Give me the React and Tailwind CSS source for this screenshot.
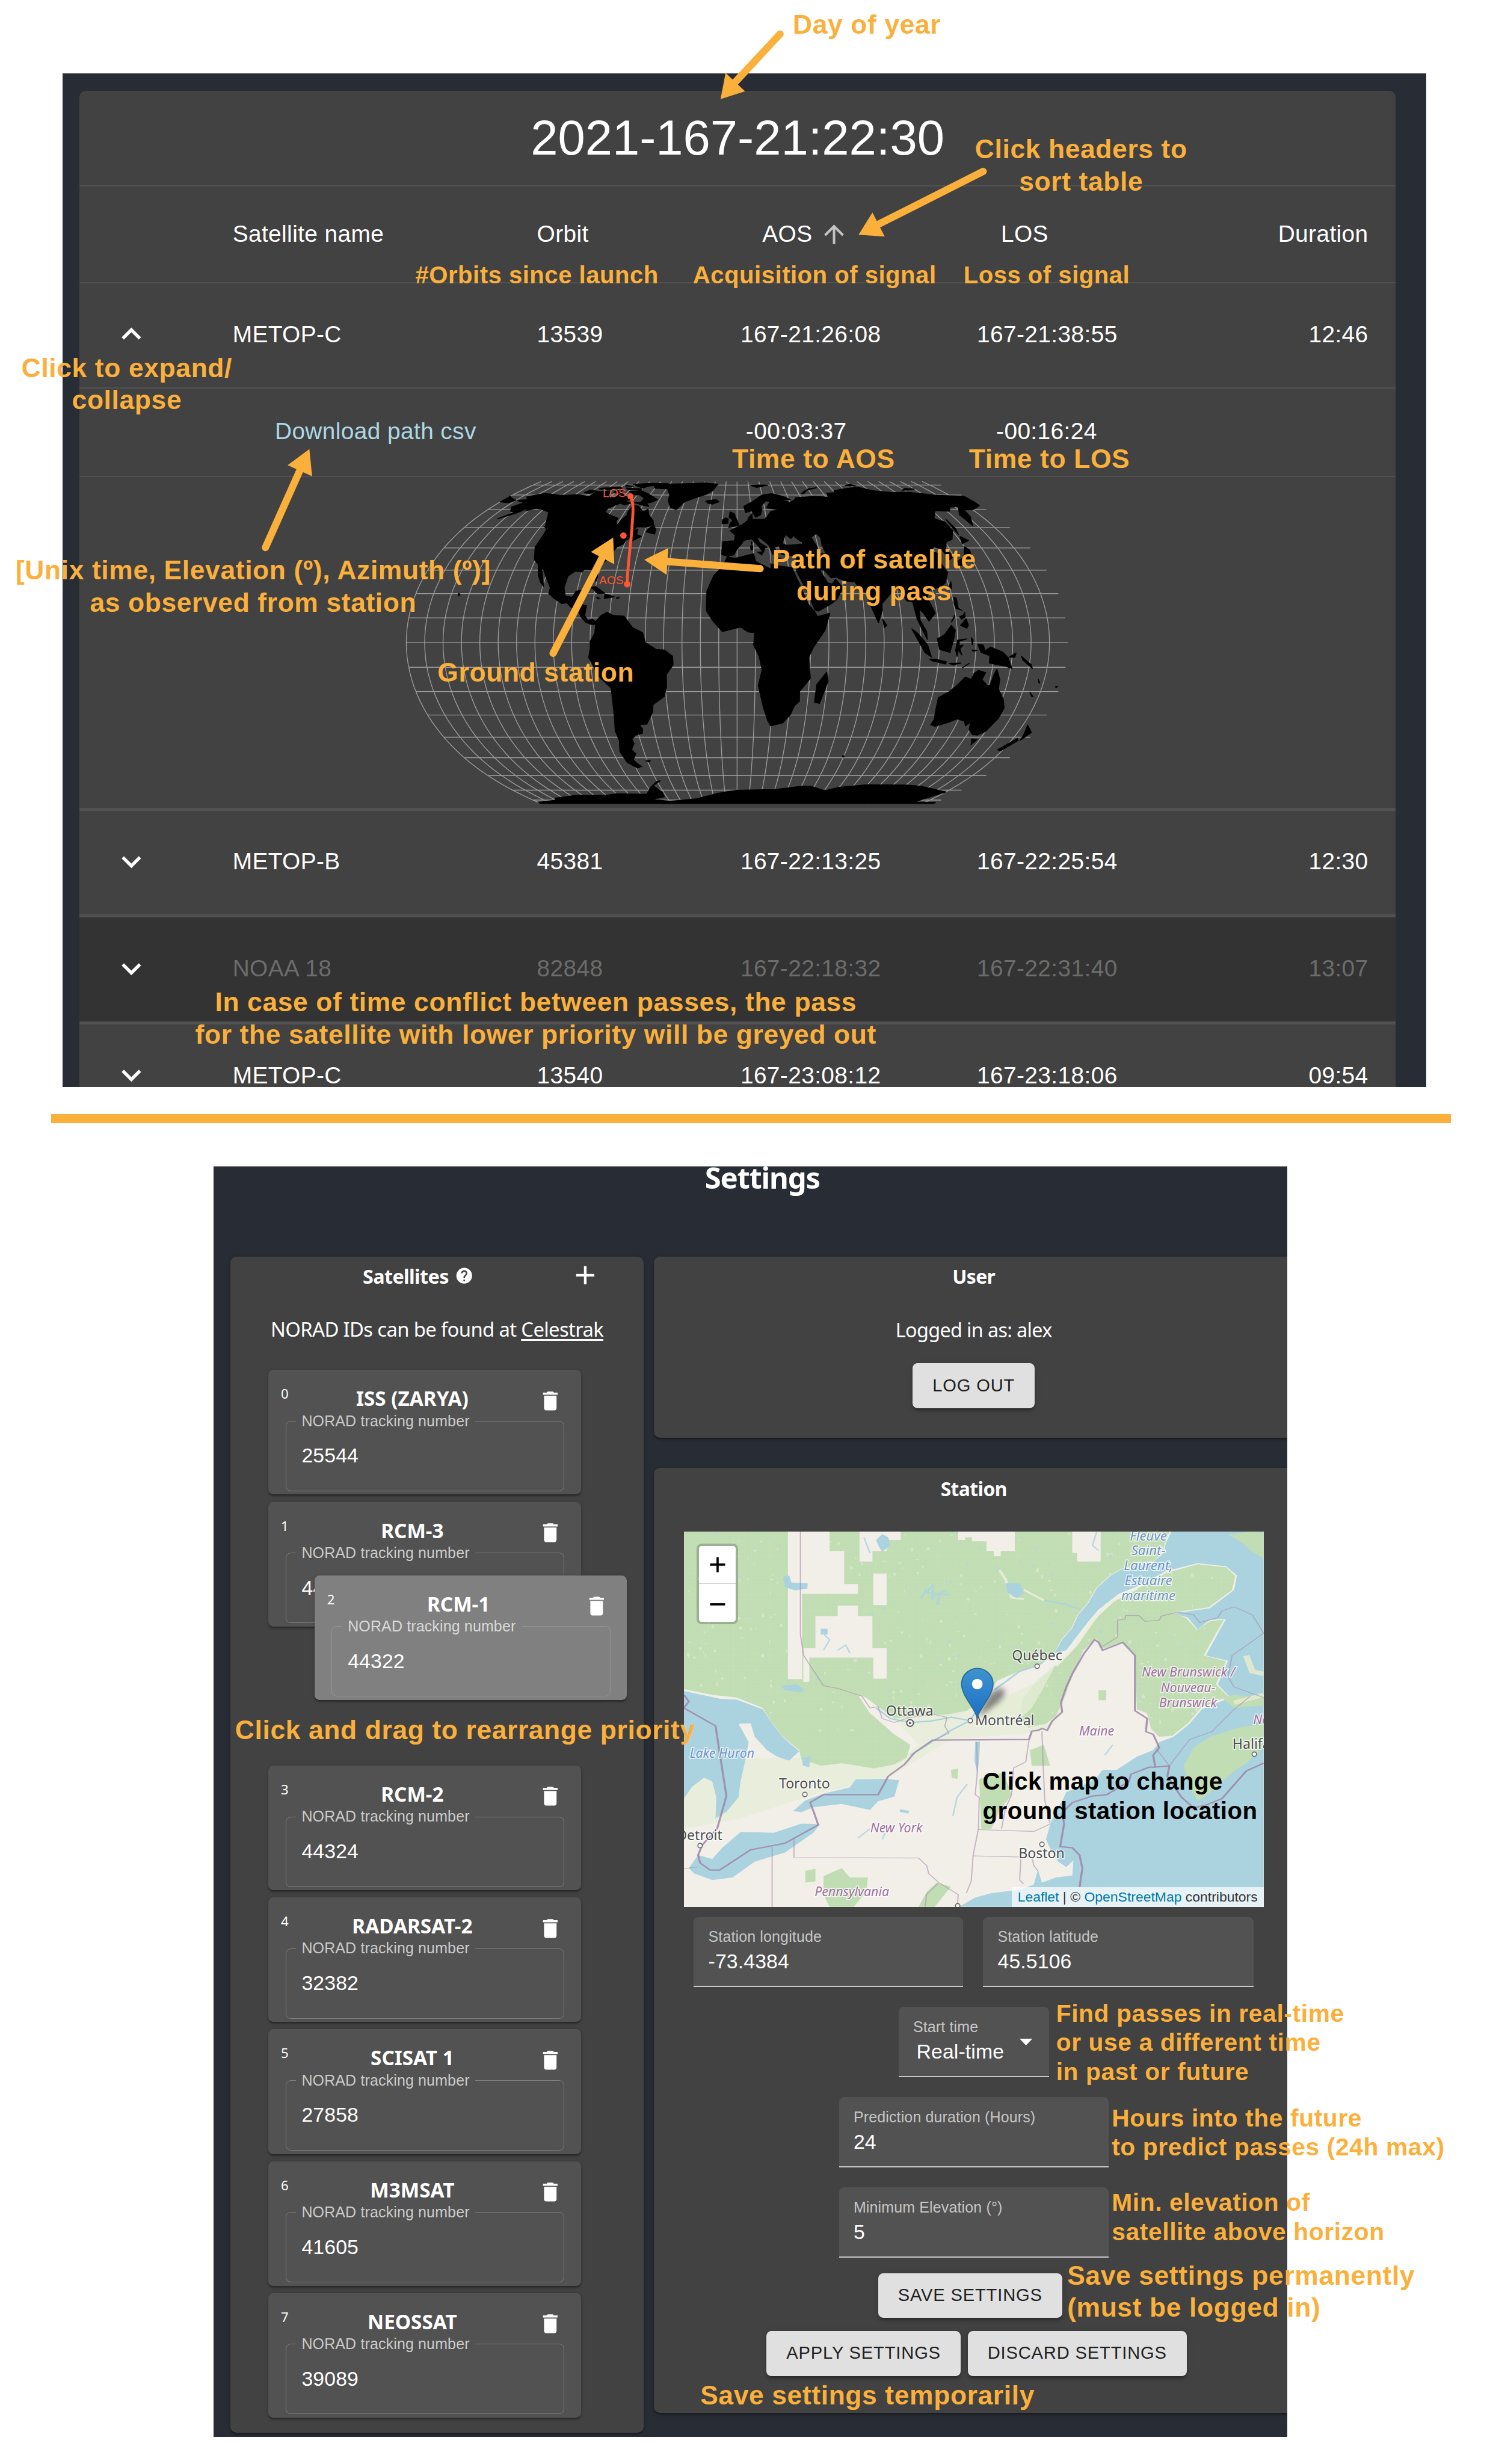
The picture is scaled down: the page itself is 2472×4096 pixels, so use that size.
import React from "react";

/* ---------- world map (Equal Earth projection) ---------- */

const A1 = 1.340264, A2 = -0.081106, A3 = 0.000893, A4 = 0.003796;
const SCALE = 219.65, CX = 1182, CY = 297.5;

function project(lon, lat) {
  const t = Math.asin((Math.sqrt(3) / 2) * Math.sin((lat * Math.PI) / 180));
  const t2 = t * t, t6 = t2 * t2 * t2;
  const x =
    ((2 * Math.sqrt(3)) / 3) * ((lon * Math.PI) / 180) * Math.cos(t) /
    (9 * A4 * t6 * t2 + 7 * A3 * t6 + 3 * A2 * t2 + A1);
  const y = t * (A4 * t6 * t2 + A3 * t6 + A2 * t2 + A1);
  return [(CX + x * SCALE).toFixed(1), (CY - y * SCALE).toFixed(1)];
}

const LAND = [
  [-168,66,-162,66.5,-166,68.5,-156,71.3,-141,69.7,-128,70.3,-115,68.5,-108,68,-96,68,-94,72,-88,68.5,-82,69,-82,67,-87,64.5,-94,61,-94,58.5,-88,56.5,-82,55,-82,53,-80,51.3,-79,54,-77,56.5,-78,59,-77,62.4,-73,62.2,-70,60.5,-67,58.5,-64.5,60.3,-62,57,-57,53.5,-56,51.8,-60,50.2,-66,50.2,-70,47.5,-65,49.2,-64.5,46.5,-61,45.5,-65.5,43.5,-66,45,-70,43.7,-70.5,42,-74,40.5,-76,37,-75.7,35.3,-78.5,33.8,-81.3,31.5,-80,27,-80.5,25.2,-82,27,-83.5,30,-89,30.3,-90,29.2,-94,29.5,-97.3,27.5,-97.7,22.5,-96,19,-92,18.5,-90.5,21,-87,21.5,-88.3,17,-88.5,15.8,-83.3,15,-83.7,11,-81.5,8.8,-79.5,9.5,-77.3,8.5,-78,7.3,-80,7.4,-83,8.3,-85.7,10.5,-87.5,13,-92,14.5,-94.5,16.2,-97,15.8,-102,18,-105.5,20,-105.5,22.5,-109.3,26.5,-112.5,30,-114.7,31.7,-112,27.5,-109.5,23,-112,24.8,-114.5,27.8,-117,32.5,-120.6,34.6,-122.5,37.7,-124.3,40.4,-124,46.3,-124.6,48.4,-122.7,49,-127.5,51,-130.3,54.5,-134,58.5,-139.5,59.7,-146,60.8,-151.5,59.3,-152,61,-156,58,-164.5,54.6,-158,58.5,-162,59,-165.5,61.5,-161,64.5,-168,65.7],
  [-61.5,66.5,-66,68.5,-72,71,-80,73.7,-89,73,-84,70,-78,70,-72.5,67.5,-73,64.5,-78,64.5,-70,62.7,-65,62,-68,64,-64,65],
  [-117,69,-116,73,-106,73.5,-102,69,-110,68.6],
  [-125,72,-123,74.3,-117,73.5,-120,71.2],
  [-62,82.5,-78,83,-92,81,-88,79,-80,76.2,-78,78.5,-66,80.5],
  [-80,74.7,-92,74.8,-95,76.5,-82,75.8],
  [-98,76,-110,75,-117,75.5,-115,76.5,-100,77],
  [-86,65.5,-80,64,-84,63,-87,63.7],
  [-98,80,-90,78.5,-97,78.5],
  [-101,73.5,-96,74,-96,72,-101,72],
  [-59,47.7,-53,46.7,-53,48.8,-55.8,51.5,-58,49.5],
  [-128,50.7,-123.5,48.4,-125.5,50],
  [-44,60,-49,61.5,-53,66,-54,70,-59,75.5,-70,76.2,-72,78.3,-62,81.5,-45,82.3,-30,83.5,-17,81.5,-19,77,-20,74,-25,70.5,-32,68,-40,65],
  [-24,65.5,-22,64,-18.5,63.4,-13.7,65,-16,66.5,-21,66],
  [-85,22,-80,23,-74.3,20.2,-78,20,-82,22.3],
  [-74,19.8,-68.5,18.6,-74,18],
  [-67.2,18.4,-65.6,18.3,-67.2,18],
  [-78.3,18.4,-76.3,18,-77.5,17.8],
  [-156,20.2,-155,19.5,-155.8,19],
  [-77.3,8.5,-75,10.8,-71.5,12.3,-68,11,-62,10.7,-57,6,-51.5,4,-50,0,-44,-2.8,-39.5,-3,-35.2,-5.5,-35,-9,-39,-13,-39.3,-18,-41,-22,-48,-25.5,-48.7,-28.5,-53.5,-34,-58,-34.2,-56.7,-36.3,-57.5,-38.2,-62,-39,-65,-41,-64.5,-43,-67.5,-46,-65.8,-48,-69,-51,-68.3,-52.5,-65.5,-54.8,-69,-55.5,-74,-52.5,-75.5,-47,-73,-41.5,-73.5,-37,-71.5,-30,-70.3,-18.5,-76,-14,-81,-6,-80,-2.5,-80,0.5,-77.5,3.8],
  [-61,-51.7,-58,-51.5,-59,-52.3],
  [-6,35.8,-1,35.3,10,37.3,11,33.8,19.8,30.4,20,32.8,25,31.7,32,31.2,32.7,29.5,35.5,24,37.2,20,39.5,15.5,43.2,12,44,10.5,51,11.9,48,5,41.5,-2,39,-6,40.5,-14.5,35,-20,35.4,-24,32.8,-26,31,-29.8,27,-33.5,20,-34.8,18,-32.5,15,-26.5,11.8,-17.5,13.7,-11,12,-5.5,9,-1,9.6,4,6,4.3,2,6.3,-4,5.2,-8,4.4,-13,8.5,-17,13,-17,21,-13.5,27.5,-9.8,30.5,-6.8,34.2],
  [49.3,-12,50.4,-15.7,47,-25,44,-24.5,44.3,-17],
  [-9,43,-9.3,37,-5.6,36,-2,36.8,0,39.5,3.2,42.3,4,43.5,9,44.3,12.5,41.5,16,38,17,40,18.5,40.2,14,42.5,12.5,45.3,15,44.5,19.5,41.5,21.5,37,24,38,23,40.5,26,41,27,37,31,36.5,36,36.7,35,33,34.2,31.2,34.8,29,39,21.5,43,13,45,12.8,52,15.7,55.5,17.5,59.8,22.5,56.3,26,54,24,51.5,24.5,50,27,48,30,50.5,30,54,26.7,57,27,61.5,25.2,67,25,70,21,72.8,20.5,73.5,16,77.3,8,80,13,80.3,15.8,86.5,20.3,91,22.5,94.3,17,97.5,16.5,98.5,10,100.5,6,103.5,1.3,103.3,4.5,100.2,9,100.5,13.5,102.5,12,105,8.7,109,12,106,18.5,108.5,21.6,114,22.5,118.5,24.5,122,29,119.5,35,122.5,37,118,38.8,121.5,40.5,125,39.5,126.5,34.5,129.4,36,127.7,39.5,131,43,135.5,44,140.5,48.5,140.3,53,135.3,54.7,142,59.3,152,59,156,61.5,163,62,156,57,156.7,51,162,56,163.5,59.8,170.5,60,179.5,62.5,180,65,180,69,160,69.7,140,72.5,128,72,113,73.7,104,77.5,87,75,80.5,73.5,80,72,73,71.5,72,68,68,68.5,60,69,54,68.3,46,68,44,66.2,40,64.7,33,66.7,41,66.5,36,69,28,71,20,70,12.5,65.5,5,62,6,58.2,10.5,59.3,12.8,55.5,16.5,57,18,60,17.5,62,22,65.7,25,65.2,21.5,61,29.5,60,24,58.8,21,56,19,54.5,10.5,54.3,10.5,57.5,8.2,55.5,7,53.5,3,51.3,-1.5,49.5,-4.5,48.4,-1.2,46,-1.7,43.4],
  [28,42,31,46.5,34,44.5,38,47,36.5,45.3,41.5,42,36,41.5,31,41.2],
  [47,45,51,47,53,45,52.5,41,54,37,50,37.5,49,41],
  [-180,69,-175,67.3,-170,66,-173,64.3,-180,65],
  [-5.5,50,1.3,51.3,0,53.5,-2,57.5,-5,58.6,-5.5,55.5,-3,54,-4.7,52],
  [-10,52,-6.3,52.2,-6,54.5,-8,55.2,-10,54],
  [52,71,56,73.5,68,76.8,60,75.5,54,71],
  [12,79.8,20,80.2,27,80,17,77],
  [95,79.5,100,81,104,79],
  [138,74,150,75.3,143,76],
  [12.5,38,15.5,38.2,15,36.7],
  [8.3,41,9.7,41,9.5,39,8.5,39],
  [8.7,42.8,9.5,42.8,9.2,41.5],
  [23.6,35.5,26.2,35.2,24.5,34.9],
  [130,31.5,131,34,136,35.8,140,40.5,141.8,39,140.5,35.5,135.7,33.5],
  [140,42,145.3,43.5,142,45.5],
  [142,46.5,143.5,49.5,143,54.3,142,50],
  [120,23,121.8,25,121,22],
  [108.7,19.3,111,20,109.5,18.3],
  [120.3,16,121,18.5,122.2,18,122,14,124,13,120.6,14],
  [122,7,125.5,9.7,126.3,7,125.3,5.8],
  [117.2,8.3,119.5,11.2,119,10],
  [122,10.5,124,11,125.3,12.3,125,10.3,123,9.5],
  [109,1.5,113,3.2,117,7,119,5,117.8,1,116,-4,110.3,-2.8],
  [95.3,5.5,98.5,3.7,103.7,-1,106,-5.8,102.3,-4],
  [105.2,-6.7,108.5,-6.7,114.4,-7.8,114,-8.7,106.5,-7.4],
  [119,-3,120,1,125,1.5,120.8,0.5,121,-1.3,123,-1,121.3,-2.5,122.5,-5,120.5,-3,120,-5.6],
  [127.5,2,128.5,1,128,-0.8],
  [128,-3,130.7,-3.2,128.5,-3.5],
  [116,-8.4,122.5,-8.3,118,-9],
  [131,-0.8,134,-1,135,-3.3,138,-1.8,144.5,-3.8,147.8,-6,150.8,-10.5,147,-9.5,143,-9,138,-8.3,137.8,-5.3,133,-4,132,-2.5],
  [148.5,-5.8,152,-4.2,151.5,-6],
  [155,-5.5,161,-9,162,-10.5,156,-7],
  [123.5,-10.2,127,-8.4,125,-9.5],
  [164.2,-20.2,167,-22.2,166,-22],
  [166.7,-15,168,-16.5,167.3,-16.2],
  [177.3,-18,178.6,-17.7,178,-18.3],
  [79.8,9.5,81.8,7,80.3,6],
  [69,-49,70.5,-49.2,69.5,-49.7],
  [113.7,-22.5,114.2,-26.5,115.7,-32,115.1,-34.3,118,-35,124,-33.5,129,-31.7,134,-32.7,136,-34.8,138,-33.2,139.5,-36.5,143.5,-38.8,146.5,-39,150,-37.4,153,-31.5,153.3,-27,150.8,-23.3,146,-19,145.3,-15,142.6,-10.8,141.5,-13,140.8,-17.5,139,-17.4,135.5,-15,136.8,-12.2,132.6,-11.3,130.5,-12.5,129.5,-15,126,-14,122.3,-17.5,119,-20],
  [144.8,-40.8,148.3,-41,147,-43.6],
  [172.8,-34.5,178.3,-37.8,175.3,-41.5,174.8,-39],
  [172.7,-40.6,174.2,-41.5,171,-44.5,169,-46.6,166.6,-46],
  [-180,-90,-180,-84.5,-160,-80,-157,-77.5,-135,-74.5,-110,-74.5,-100,-73,-75,-73.5,-68,-68,-60,-63.5,-57.5,-63.3,-65,-66.5,-61,-72,-62,-76,-75,-79,-60,-82,-36,-78.5,-15,-72.5,0,-70,30,-69.5,50,-67,57,-67,69,-70,72,-70,80,-67.8,100,-66,130,-66.2,143,-67,170,-71.5,163,-78,160,-84,180,-84.5,180,-90],
];

const toPath = (flat, close) => {
  let d = "";
  for (let i = 0; i < flat.length; i += 2) {
    d += (i ? "L" : "M") + project(flat[i], flat[i + 1]).join(" ");
  }
  return d + (close ? "Z" : "");
};

const landPath = LAND.map((p) => toPath(p, true)).join("");

const gridPath = (() => {
  let d = "";
  for (let lon = -180; lon < 180; lon += 10) {
    const line = [];
    for (let lat = -90; lat <= 90; lat += 3) line.push(lon, lat);
    d += toPath(line);
  }
  for (let lat = -80; lat <= 80; lat += 10) d += toPath([-180, lat, 180, lat]);
  return d;
})();

function WorldMap() {
  return (
    <svg className="block h-[594px] w-[2365px]" viewBox="0 0 2365 594">
      <path d={gridPath} fill="none" stroke="#9a9a9a" strokeWidth="1.5" />
      <path d={landPath} fill="#000" stroke="#000" strokeWidth="1.6" strokeLinejoin="round" fillRule="evenodd" />
      <path d="M990.4 34.8C998 50 994 70 993 92C990 130 985 160 984.4 192.6" fill="none" stroke="#ff5533" strokeWidth="5.2" />
      <circle cx="990.4" cy="34.8" r="5.5" fill="#ff5533" />
      <circle cx="984.4" cy="192.6" r="5.8" fill="#ff5533" />
      <circle cx="977.7" cy="105.2" r="5.8" fill="#ff5533" />
      <text x="940.5" y="36" fontSize="20.5" fill="#ff5533" className="font-['Liberation_Sans',sans-serif]">LOS</text>
      <text x="934" y="192.6" fontSize="20.5" fill="#ff5533" className="font-['Liberation_Sans',sans-serif]">AOS</text>
    </svg>
  );
}

/* ---------- passes panel ---------- */

function Chevron({ up }) {
  return (
    <svg className="ml-[58px] size-[70px]" viewBox="0 0 24 24" fill="#fff">
      {up ? (
        <path d="M12 8l-6 6 1.41 1.41L12 10.83l4.59 4.58L18 14z" />
      ) : (
        <path d="M16.59 8.59L12 13.17 7.41 8.59 6 10l6 6 6-6z" />
      )}
    </svg>
  );
}

function PassRow({ up, name, orbit, aos, los, duration, dim, className }) {
  return (
    <div className={`flex shrink-0 items-center border-[#515151] pb-[3px] ${className}`}>
      <div className="w-[275px]"><Chevron up={up} /></div>
      <div className={`flex flex-1 items-center pr-[49px] ${dim ? "text-[#6c6c6c]" : "text-white"}`}>
        <div className="w-[547px]">{name}</div>
        <div className="w-[316px]">{orbit}</div>
        <div className="w-[352px] text-center">{aos}</div>
        <div className="w-[498px] text-center">{los}</div>
        <div className="flex-1 text-right">{duration}</div>
      </div>
    </div>
  );
}

function PassesPanel() {
  return (
    <section className="ml-[112px] mt-[132px] h-[1821px] w-[2451px] shrink-0 overflow-hidden bg-[#282c34] pl-[31px] pt-[31px]">
      <div className="flex h-[1900px] w-[2365px] flex-col rounded-[11px] bg-[#424242] font-['Liberation_Sans',Arial,sans-serif] text-[42px] tracking-[0.01em] text-white">
        <div className="flex h-[172px] shrink-0 items-center justify-center border-b-[3px] border-[#515151] text-[88px] tracking-normal">
          2021-167-21:22:30
        </div>
        <div className="flex h-[174px] shrink-0 items-center border-b-[3px] border-[#515151] pl-[275px] pr-[49px]">
          <div className="w-[547px]">Satellite name</div>
          <div className="w-[316px]">Orbit</div>
          <div className="flex w-[352px] items-center justify-center">
            AOS
            <svg className="ml-[13px] mr-[18px] size-[53px]" viewBox="0 0 24 24" fill="#c3c3c3">
              <path d="M4 12l1.41 1.41L11 7.83V20h2V7.83l5.58 5.59L20 12l-8-8-8 8z" />
            </svg>
          </div>
          <div className="w-[498px] pr-[81px] text-center">LOS</div>
          <div className="flex-1 text-right">Duration</div>
        </div>
        <PassRow up name="METOP-C" orbit="13539" aos="167-21:26:08" los="167-21:38:55" duration="12:46" className="h-[189px] border-b-[3px]" />
        <div className="flex h-[159px] shrink-0 items-center border-b-[3px] border-[#515151] pb-0.5 pl-[351px]">
          <div className="w-[788px] text-[#add8e6]">Download path csv</div>
          <div className="w-[298px] text-center">-00:03:37</div>
          <div className="w-[602px] text-center">-00:16:24</div>
        </div>
        <div className="h-[600px] shrink-0 border-b-[6px] border-[#515151]"><WorldMap /></div>
        <PassRow name="METOP-B" orbit="45381" aos="167-22:13:25" los="167-22:25:54" duration="12:30" className="h-[192px] border-b-[6px]" />
        <PassRow dim name="NOAA 18" orbit="82848" aos="167-22:18:32" los="167-22:31:40" duration="13:07" className="h-[192px] border-b-[6px] bg-[#333333]" />
        <PassRow name="METOP-C" orbit="13540" aos="167-23:08:12" los="167-23:18:06" duration="09:54" className="h-[192px] border-b-[6px]" />
      </div>
    </section>
  );
}

/* ---------- settings panel ---------- */

const SHADOW = "shadow-[0_5px_3px_-2px_rgba(0,0,0,0.2),0_2px_3px_0_rgba(0,0,0,0.14),0_2px_7px_0_rgba(0,0,0,0.12)]";

function SatelliteCard({ index, name, norad, dragged }) {
  return (
    <div className={`h-[224px] w-[562px] rounded-[9px] ${SHADOW} ${dragged ? "bg-[#808080]" : "bg-[#525252]"}`}>
      <div className="flex h-[75px] items-start font-['Noto_Sans',sans-serif] text-white">
        <span className="w-[60px] pl-[23px] text-[24px] leading-[86px]">{index}</span>
        <span className="flex-1 text-center text-[36px] font-bold leading-[102px]">{name}</span>
        <svg className="ml-[27px] mr-[32px] mt-[33px] size-[45px]" viewBox="0 0 24 24" fill="#fff">
          <path d="M6 19c0 1.1.9 2 2 2h8c1.100 0 2-.9 2-2V7H6v12zM19 4h-3.500l-1-1h-5l-1 1H5v2h14V4z" />
        </svg>
      </div>
      <fieldset className={`ml-[31px] h-[143px] w-[501px] rounded-[9px] border-2 pl-[18px] font-['Liberation_Sans',Arial,sans-serif] tracking-[0.01em] ${dragged ? "border-[#959595]" : "border-[#7e7e7e]"}`}>
        <legend className={`px-[10px] text-[27px] leading-[34px] ${dragged ? "text-[#d9d9d9]" : "text-[#cbcbcb]"}`}>NORAD tracking number</legend>
        <div className="mt-[23px] pl-[10px] text-[36.500px] leading-[44px] text-white">{norad}</div>
      </fieldset>
    </div>
  );
}

function Button({ children, className }) {
  return (
    <button className={`h-[81px] rounded-[9px] bg-[#e0e0e0] font-['Liberation_Sans',Arial,sans-serif] text-[31.500px] tracking-[0.0286em] text-[#212121] shadow-[0_7px_3px_-5px_rgba(0,0,0,0.2),0_5px_5px_0_rgba(0,0,0,0.14),0_2px_11px_0_rgba(0,0,0,0.12)] ${className}`}>
      {children}
    </button>
  );
}

function Field({ label, value, className }) {
  return (
    <div className={`h-[126px] rounded-t-[9px] border-b-[3px] border-[#c6c6c6] bg-[#525252] px-[26px] pt-[19px] font-['Liberation_Sans',Arial,sans-serif] tracking-[0.01em] ${className}`}>
      <div className="text-[27px] leading-[34px] text-[#c6c6c6]">{label}</div>
      <div className="mt-[5px] text-[36.500px] leading-[44px] text-white">{value}</div>
    </div>
  );
}

const SPECKS = (() => {
  const out = [];
  let s = 7;
  const rnd = () => ((s = (s * 16807) % 2147483647) / 2147483647);
  for (let i = 0; i < 520; i++) {
    out.push([50 + rnd() * 1300, 75 + rnd() * 760, 1 + rnd() * 3.5, 1.5 + rnd() * 6, rnd()]);
  }
  return out;
})();

const SEA = "M1245 68L1473 68L1473 1497L720 1497L760 1462L800 1445L870 1432L905 1412L915 1355L925 1405L960 1385L1000 1378L1003 1320L985 1345L965 1325L950 1290L935 1240L945 1185L960 1130L975 1095L985 1060L1020 1040L1060 1005L1075 975L1110 975L1160 925L1200 900L1215 870L1250 850L1290 800L1320 745L1390 700L1360 650L1385 560L1330 540L1380 400L1340 405L1310 440L1285 395L1250 380L1340 360L1400 290L1407 235L1380 200L1310 188L1230 220L1170 270L1115 305L1065 365L1040 410L1010 470L985 520L955 532L975 480L1000 435L1015 385L1040 340L1060 285L1095 235L1125 210L1200 185L1225 150L1232 110Z";

const GREENS = [
  "M40 68L1240 68L1230 110L1222 150L1200 182L1125 208L1092 235L1058 285L1038 340L1013 385L998 435L973 480L953 535L915 575L860 605L815 635L790 690L740 750L690 765L640 765L560 780L520 735L490 700L470 690L500 760L560 840L600 880L590 930L560 955L510 970L430 950L380 960L330 935L325 900L285 850L255 790L235 740L170 700L110 690L40 668Z",
  "M1115 318L1175 275L1232 226L1310 192L1380 204L1403 238L1395 290L1338 356L1250 376L1282 398L1308 442L1342 408L1375 404L1350 470L1325 540L1380 562L1355 650L1385 695L1318 740L1288 795L1248 845L1215 850L1195 820L1185 760L1160 745L1155 540L1125 488L1075 515L1058 475L1028 520L1003 605L985 680L960 770L935 800L890 815L870 770L880 700L905 650L950 590L990 540L1015 480L1050 410Z",
  "M1473 800L1410 815L1340 850L1300 890L1275 960L1290 1040L1310 1095L1350 1050L1400 980L1430 950L1473 890Z",
  "M1473 730L1400 740L1370 700L1400 690L1473 700Z",
  "M1385 80L1440 68L1473 72L1473 170L1440 140L1420 110Z",
  "M770 1010L830 985L850 1070L820 1130L800 1200L775 1200Z",
  "M385 1380L430 1350L450 1385L495 1385L490 1440L460 1497L400 1497L385 1450Z",
  "M340 1360L365 1352L365 1400L340 1405Z",
  "M895 900L930 880L945 960L900 960Z",
  "M700 975L718 970L716 1010L702 1005Z",
  "M640 1440L665 1405L700 1420L660 1497L620 1497Z",
];

const CLEARINGS = [
  "M297 68H400V142H436V268H470V305H332V630H297Z",
  "M365 390H420V350H470V390H506V512H541V628H508V548H365Z",
  "M508 228H541V348H508Z",
  "M474 68H576V100H541V142H506V182H474Z",
  "M718 68H858V142H823V162H806V142H788V105H752V90H735V100H718Z",
  "M1000 68H1070V182H1012V150H1000Z",
  "M335 512H366V548H350V640H335Z",
];

const LAKES = [
  "M40 675L130 705L170 708L235 745L255 792L285 852L325 905L300 940L270 925L245 900L215 850L205 798L175 800L200 870L190 950L180 1020L175 1080L145 1135L118 1160L120 1080L110 1020L90 1005L60 1040L40 1085Z",
  "M310 1132L340 1092L385 1066L450 1042L465 1012L540 1010L572 1015L560 1078L520 1095L500 1128L430 1105L360 1118L330 1137Z",
  "M52 1350L75 1300L110 1315L135 1272L180 1212L262 1215L330 1180L376 1182L360 1215L290 1290L215 1325L160 1385L110 1395L65 1370Z",
  "M285 240L300 235L306 262L346 265L345 285L315 292L290 280Z",
  "M835 265L870 265L880 300L862 322L840 300Z",
  "M280 655L320 650L336 668L330 680L290 672Z",
  "M760 868H772L770 930L766 990L758 940Z",
  "M515 100L530 78L545 90L550 120L530 145L520 120Z",
  "M378 438H395V460H378Z",
  "M332 930L352 925L350 965L334 960Z",
  "M575 1125L597 1132L595 1142L573 1135Z",
];

const BORDERS_MAJOR = [
  "M40 690L52 715L40 740L118 808L145 1075L122 1200L85 1262L75 1300L80 1330L105 1357L128 1357L205 1280L290 1255L372 1185L362 1140L352 1100L385 1070L520 1070L545 1000L585 955L610 910L655 862L893 860L900 828L915 825L925 818L938 825L950 790L975 755L972 720L985 660L1000 610L1030 530L1055 480L1065 490L1075 520L1125 490L1155 540L1155 750L1185 780L1182 830L1200 840L1215 890L1200 920L1205 965L1240 960",
  "M1205 965L1190 965L1145 992L1140 1020L1085 1070L1050 1075L1000 1100L975 1140L980 1180L970 1268L1000 1272L1018 1300L1025 1350L1018 1422",
  "M1240 960L1235 1000L1270 1080L1300 1120L1330 1110L1370 1085L1430 980L1473 950",
];

const BORDERS_MINOR = [
  "M328 68L328 460L336 540L385 655L420 665L480 695L500 740L520 735L530 780L560 795L600 775L660 765L690 775L685 810L695 835L660 862",
  "M764 870L765 990L760 1070L770 1080L768 1200L755 1300L750 1400L738 1445",
  "M768 1203L905 1210L945 1182",
  "M893 862L885 945L855 968L850 1070L835 1120L825 1200",
  "M925 830L928 960L932 1090L945 1180",
  "M755 1303L870 1307L900 1307L905 1340L915 1360",
  "M873 1310L870 1395L880 1410",
  "M312 1240L312 1310L620 1311L640 1340L645 1370L670 1405L718 1450L716 1497",
  "M258 1268V1497",
  "M636 1497L640 1450L668 1408",
  "M1075 505L1112 470L1112 405L1130 402L1132 388L1165 388L1180 410L1215 405L1220 390L1260 375L1300 385L1315 415L1360 395L1370 370L1400 355L1445 385L1473 455L1395 540L1385 620L1400 660L1473 700",
  "M1210 900L1240 960L1290 860L1345 830L1400 745L1440 695",
  "M40 1352L75 1345",
];

function MapLabel({ x, y, size = 25, fill = "#4d4d4d", italic, anchor = "middle", children }) {
  return (
    <text
      x={x}
      y={y}
      fontSize={size}
      textAnchor={anchor}
      fill={fill}
      stroke="#ffffff"
      strokeOpacity="0.75"
      strokeWidth="3.5"
      paintOrder="stroke"
      fontStyle={italic ? "italic" : "normal"}
      className="font-['Noto_Sans',sans-serif]"
    >
      {children}
    </text>
  );
}

const CITIES = [[634.7, 242], [514.7, 339.800], [217.4, 472.4], [29, 564.4], [643.4, 562], [1025, 400], [492, 672.500]];

function StationMap() {
  const blue = "#6f93c8";
  const purple = "#9d6f9e";
  return (
    <div className="relative mt-[40px] h-[675px] w-[1042px] overflow-hidden bg-[#f2efe9]">
      <svg className="block h-[675px] w-[1042px]" viewBox="0 0 1042 675">
        <defs>
          <linearGradient id="pin" x1="0" y1="0" x2="0" y2="1">
            <stop offset="0" stopColor="#3e93cf" />
            <stop offset="1" stopColor="#1d6fc4" />
          </linearGradient>
          <filter id="pinShadow" x="-50%" y="-50%" width="200%" height="200%">
            <feGaussianBlur stdDeviation="5" />
          </filter>
          <pattern id="tiles" width="9" height="9" patternUnits="userSpaceOnUse">
            <path d="M0 0H9M0 0V9" stroke="#d3e6c4" strokeWidth="1.2" />
          </pattern>
        </defs>
        <g transform="translate(-29.08 -32.09) scale(0.727 0.4719)">
          <path d="M40 930L330 930L560 960L620 880L560 780L900 690L980 560L1000 800L930 830L700 860L540 1010L380 1060L180 1160L40 1200Z" fill="#e9eddb" />
          <path d={GREENS[0]} fill="#c1ddb3" />
          <path d={SEA} fill="#aad3df" />
          {GREENS.slice(1).map((d) => <path key={d} d={d} fill="#c1ddb3" />)}
          <path d={GREENS[0]} fill="url(#tiles)" opacity="0.4" />
          <path d={GREENS[1]} fill="url(#tiles)" opacity="0.4" />
          <clipPath id="woods"><path d={GREENS[0]} /><path d={GREENS[1]} /></clipPath>
          <g clipPath="url(#woods)">
            {SPECKS.map(([x, y, w, h, k], i) => (
              <ellipse key={i} cx={x} cy={y} rx={w} ry={h} fill={k < 0.35 ? "#b2d7dc" : "#dbe8cd"} opacity="0.75" />
            ))}
            <path d="M640 300L655 268M650 320L690 290M625 325L640 285M665 345L675 300M640 300L700 310M655 330L655 270" fill="none" stroke="#aed5dd" strokeWidth="5" />
          </g>
          {CLEARINGS.map((d) => <path key={d} d={d} fill="#f2efe9" />)}
          {LAKES.map((d) => <path key={d} d={d} fill="#aad3df" />)}
          <path d="M820 215L835 250L850 320L880 325M880 290L930 330" fill="none" stroke="#e6ecd9" strokeWidth="7" />
          <path d="M835 265L870 265L880 300L862 322L840 300Z" fill="#aad3df" />
          <path d="M1160 285L1085 345L1050 410L1010 500L960 580" fill="none" stroke="#eeeede" strokeWidth="7" />
          <path d="M960 570L900 650L830 700L790 770L850 810L900 740L930 660Z" fill="#e4ecd6" opacity="0.8" />
          <path d="M1068 525L1125 495L1152 545L1152 745L1182 790L1180 835L1208 880L1150 925L1085 965L1045 930L960 900L930 830L960 790L985 690L1003 610L1040 540Z" fill="#f2efe9" />
          <path d="M1065 672H1084V710H1065Z" fill="#c1ddb3" />
          <path d="M1430 540L1445 600L1473 610M1400 720L1473 690" fill="none" stroke="#dfe8cf" strokeWidth="16" />
          <path d="M955 535L915 578L870 600L835 640L808 670M790 700L745 790L700 825L660 862L600 920M748 788L700 775L650 790L600 795L550 780L515 740M930 330L985 345L1020 365" fill="none" stroke="#aad3df" strokeWidth="5" />
          <path d="M380 450L400 480L385 520M420 520L440 500L450 530M485 90L500 150M740 1030L715 1080L705 1150M540 1210L530 1240M500 1200L470 1235M1060 70L1050 120L1065 140M1100 880L1080 920" fill="none" stroke="#b6d9e3" strokeWidth="4" />
          {BORDERS_MINOR.map((d) => <path key={d} d={d} fill="none" stroke="#a890ae" strokeOpacity="0.6" strokeWidth="3" />)}
          {BORDERS_MAJOR.map((d) => <path key={d} d={d} fill="none" stroke="#9d86a8" strokeOpacity="0.85" strokeWidth="5" />)}
        </g>
        {CITIES.map(([x, y]) => <circle key={x} cx={x} cy={y} r="4" fill="#fff" stroke="#666" strokeWidth="1.8" />)}
        <circle cx="406.4" cy="344" r="6" fill="#fff" stroke="#555" strokeWidth="2" />
        <circle cx="406.4" cy="344" r="2.2" fill="#555" />
        <MapLabel x="834.600" y="16" fill={blue} size={24} italic>Fleuve</MapLabel>
        <MapLabel x="834.600" y="42.500" fill={blue} size={24} italic>Saint-</MapLabel>
        <MapLabel x="834.600" y="69.500" fill={blue} size={24} italic>Laurent,</MapLabel>
        <MapLabel x="834.600" y="96" fill={blue} size={24} italic>Estuaire</MapLabel>
        <MapLabel x="834.600" y="123" fill={blue} size={24} italic>maritime</MapLabel>
        <MapLabel x="68.300" y="407" fill={blue} size={23} italic>Lake Huron</MapLabel>
        <MapLabel x="906.600" y="261" fill={purple} size={23} italic>New Brunswick /</MapLabel>
        <MapLabel x="905.800" y="288.300" fill={purple} size={23} italic>Nouveau-</MapLabel>
        <MapLabel x="905.800" y="315.200" fill={purple} size={23} italic>Brunswick</MapLabel>
        <MapLabel x="741.500" y="366.700" fill={purple} size={23} italic>Maine</MapLabel>
        <MapLabel x="381.700" y="541" fill={purple} size={23} italic>New York</MapLabel>
        <MapLabel x="301.700" y="655" fill={purple} size={23} italic>Pennsylvania</MapLabel>
        <MapLabel x="1023" y="346" fill={purple} size={23} italic anchor="start">Nova</MapLabel>
        <MapLabel x="634.700" y="231.200">Québec</MapLabel>
        <MapLabel x="405.700" y="330.300">Ottawa</MapLabel>
        <MapLabel x="576.500" y="347.800">Montréal</MapLabel>
        <MapLabel x="216.600" y="462">Toronto</MapLabel>
        <MapLabel x="69" y="554.500" anchor="end">Detroit</MapLabel>
        <MapLabel x="642.700" y="587.500">Boston</MapLabel>
        <MapLabel x="985.800" y="390.700" anchor="start">Halifax</MapLabel>
        <path d="M527 334L545 300C556 280 580 276 576 292C572 306 545 322 527 334Z" fill="#000" opacity="0.45" filter="url(#pinShadow)" />
        <path d="M527 335C524 318 499 296 499 274A28 28 0 0 1 555.500 274C555.500 296 530 318 527 335Z" fill="url(#pin)" stroke="#2e6c97" strokeWidth="2" />
        <circle cx="527.200" cy="274" r="9.500" fill="#fff" />
      </svg>
      <div className="absolute left-[23px] top-[22px] w-[75px] rounded-[9px] border-[4.500px] border-black/20 bg-clip-padding text-black">
        <div className="flex h-[68px] items-center justify-center rounded-t-[5px] border-b-2 border-[#ccc] bg-white">
          <svg className="size-[28px]" viewBox="0 0 28 28"><path d="M14 0.500V27.500M0.500 14H27.500" stroke="#000" strokeWidth="4" /></svg>
        </div>
        <div className="flex h-[68px] items-center justify-center rounded-b-[5px] bg-white">
          <svg className="mt-[5px] size-[28px]" viewBox="0 0 28 28"><path d="M0.500 14H27.500" stroke="#000" strokeWidth="4" /></svg>
        </div>
      </div>
      <div className="absolute bottom-0 right-0 h-[36px] w-[453px] whitespace-nowrap bg-white/70 text-center font-['Liberation_Sans',Arial,sans-serif] text-[24.800px] leading-[36px] text-[#333]">
        <span className="text-[#0078a8]">Leaflet</span> | © <span className="text-[#0078a8]">OpenStreetMap</span> contributors
      </div>
    </div>
  );
}

const SATELLITES = [
  { name: "ISS (ZARYA)", norad: "25544" },
  { name: "RCM-3", norad: "44323" },
  { name: "RCM-1", norad: "44322", dragged: true },
  { name: "RCM-2", norad: "44324" },
  { name: "RADARSAT-2", norad: "32382" },
  { name: "SCISAT 1", norad: "27858" },
  { name: "M3MSAT", norad: "41605" },
  { name: "NEOSSAT", norad: "39089" },
];

function SettingsPanel() {
  return (
    <section className="ml-[384px] mt-[78px] h-[2284px] w-[1930px] shrink-0 overflow-hidden bg-[#282c34] font-['Noto_Sans',sans-serif] text-white">
      <h1 className="h-[162px] w-[1972px] text-center text-[53px] font-bold leading-[39px] tracking-[-0.025em]">Settings</h1>
      <div className="flex w-[1960px] items-start gap-[18px] pl-[30px]">
        <div className={`h-[2114px] w-[743px] shrink-0 rounded-[11px] bg-[#424242] ${SHADOW}`}>
          <div className="flex h-[71px] items-center pl-[238px]">
            <h2 className="text-[35px] font-bold tracking-[-0.02em]">Satellites</h2>
            <svg className="mb-[2px] ml-[11px] size-[34px]" viewBox="0 0 24 24" fill="#fff">
              <path d="M12 2C6.480 2 2 6.480 2 12s4.480 10 10 10 10-4.480 10-10S17.520 2 12 2zm1 17h-2v-2h2v2zm2.070-7.750l-.9.920C13.450 12.900 13 13.500 13 15h-2v-.5c0-1.100.450-2.100 1.170-2.830l1.240-1.260c.370-.360.590-.860.590-1.410 0-1.100-.9-2-2-2s-2 .9-2 2H8c0-2.210 1.790-4 4-4s4 1.790 4 4c0 .880-.360 1.680-.930 2.250z" />
            </svg>
            <svg className="mb-[4px] ml-auto mr-[77px] size-[56px]" viewBox="0 0 24 24" fill="#fff">
              <path d="M19 13h-6v6h-2v-6H5v-2h6V5h2v6h6v2z" />
            </svg>
          </div>
          <p className="h-[121px] text-center text-[35.500px] leading-[122px] tracking-[-0.02em]">
            NORAD IDs can be found at <a className="underline decoration-[3px] underline-offset-[4px]">Celestrak</a>
          </p>
          <div className="ml-[68px] mt-[12px] flex flex-col gap-[13px]">
            {SATELLITES.map((s, i) =>
              s.dragged ? (
                <div key={s.name} className="relative h-[224px] w-[562px]">
                  <div className="absolute left-[83px] top-[-105px]"><SatelliteCard index={i} {...s} /></div>
                </div>
              ) : (
                <SatelliteCard key={s.name} index={i} {...s} />
              )
            )}
          </div>
        </div>

        <div className="flex w-[1150px] shrink-0 flex-col gap-[54px]">
          <div className={`flex h-[326px] flex-col items-center rounded-[11px] bg-[#424242] ${SHADOW}`}>
            <h2 className="text-[34.500px] font-bold leading-[72px] tracking-[-0.02em]">User</h2>
            <p className="text-[35px] leading-[120px] tracking-[-0.02em]">Logged in as: alex</p>
            <Button className="w-[220px]">LOG OUT</Button>
          </div>
          <div className={`flex h-[1698px] flex-col items-center rounded-[11px] bg-[#424242] ${SHADOW}`}>
            <h2 className="h-[74px] text-[34.500px] font-bold leading-[76px] tracking-[-0.02em]">Station</h2>
            <StationMap />
            <div className="mt-[18px] flex gap-[36px]">
              <Field className="w-[484px]" label="Station longitude" value="-73.4384" />
              <Field className="w-[486px]" label="Station latitude" value="45.5106" />
            </div>
            <div className="relative mt-[36px]">
              <Field className="w-[270px]" label="Start time" value={<span className="pl-[6px]">Real-time</span>} />
              <svg className="absolute right-[30px] top-[57px] h-[12px] w-[23px]" viewBox="0 0 10 5" preserveAspectRatio="none" fill="#fff"><path d="M0 0l5 5 5-5z" /></svg>
            </div>
            <Field className="mt-[36px] w-[484px]" label="Prediction duration (Hours)" value="24" />
            <Field className="mt-[36px] w-[484px]" label="Minimum Elevation (°)" value="5" />
            <Button className="mr-[13px] mt-[28px] w-[331px]">SAVE SETTINGS</Button>
            <div className="ml-[10px] mt-[23px] flex gap-[12px]">
              <Button className="w-[350px]">APPLY SETTINGS</Button>
              <Button className="w-[394px]">DISCARD SETTINGS</Button>
            </div>
          </div>
        </div>
      </div>
    </section>
  );
}

/* ---------- annotations ---------- */

const NOTE_SIZES = {
  small: "text-[43.400px] leading-[53px] tracking-[0.012em]",
  medium: "text-[44px] leading-[52.800px] tracking-[0.016em]",
  large: "text-[48px] leading-[58px] tracking-[0.014em]",
};

function Note({ lines, size = "large", center, className }) {
  return (
    <div
      className={`absolute whitespace-nowrap font-['Liberation_Sans',Arial,sans-serif] font-bold ${NOTE_SIZES[size]} ${
        center ? "-translate-x-1/2 text-center" : ""
      } ${className}`}
    >
      {lines.map((l) => <div key={l}>{l}</div>)}
    </div>
  );
}

function Arrows() {
  return (
    <svg className="absolute left-0 top-0 h-[1260px] w-[2672px]" viewBox="0 0 2672 1260" stroke="#fbb03b" fill="#fbb03b">
      <g strokeWidth="13" strokeLinecap="round">
        <path d="M1402 61L1320 149" />
        <path d="M1767 308L1577 404" />
        <path d="M477 984L540 843" />
        <path d="M994 1174L1084 999" />
        <path d="M1366 1022L1196 1009" />
      </g>
      <g stroke="none">
        <path d="M1295 178L1304 131L1339 164Z" />
        <path d="M1543 422L1568 382L1590 425Z" />
        <path d="M556 807L517 836L561 856Z" />
        <path d="M1102 966L1062 992L1104 1014Z" />
        <path d="M1158 1006L1201 985L1198 1033Z" />
      </g>
    </svg>
  );
}

export default function App() {
  return (
    <div className="relative flex h-[4428px] w-[2672px] flex-col overflow-hidden bg-white [zoom:0.925]">
      <PassesPanel />
      <div className="ml-[92px] mt-[49px] h-[16px] w-[2516px] shrink-0 bg-[#fbb03b]" />
      <SettingsPanel />

      <Arrows />
      <div className="text-[#fbb03b]">
        <Note center className="left-[1558px] top-[15px]" lines={["Day of year"]} />
        <Note center className="left-[1943px] top-[239px]" lines={["Click headers to", "sort table"]} />
        <Note size="small" center className="left-[965px] top-[468px]" lines={["#Orbits since launch"]} />
        <Note size="small" center className="left-[1464px] top-[468px]" lines={["Acquisition of signal"]} />
        <Note size="small" center className="left-[1881px] top-[468px]" lines={["Loss of signal"]} />
        <Note center className="left-[228px] top-[632px]" lines={["Click to expand/", "collapse"]} />
        <Note center className="left-[1462px] top-[796px]" lines={["Time to AOS"]} />
        <Note center className="left-[1886px] top-[796px]" lines={["Time to LOS"]} />
        <Note center className="left-[455px] top-[996px]" lines={["[Unix time, Elevation (º), Azimuth (º)]", "as observed from station"]} />
        <Note center className="left-[963px] top-[1179px]" lines={["Ground station"]} />
        <Note center className="left-[1571px] top-[976px]" lines={["Path of satellite", "during pass"]} />
        <Note center className="left-[963px] top-[1772px]" lines={["In case of time conflict between passes, the pass", "for the satellite with lower priority will be greyed out"]} />
        <Note center className="left-[836px] top-[3080px]" lines={["Click and drag to rearrange priority"]} />
        <Note size="small" className="left-[1766px] top-[3175px] text-black" lines={["Click map to change", "ground station location"]} />
        <Note size="medium" className="left-[1898px] top-[3592px]" lines={["Find passes in real-time", "or use a different time", "in past or future"]} />
        <Note size="medium" className="left-[1998px] top-[3780px]" lines={["Hours into the future", "to predict passes (24h max)"]} />
        <Note size="medium" className="left-[1998px] top-[3932px]" lines={["Min. elevation of", "satellite above horizon"]} />
        <Note className="left-[1918px] top-[4060px]" lines={["Save settings permanently", "(must be logged in)"]} />
        <Note center className="left-[1559px] top-[4276px]" lines={["Save settings temporarily"]} />
      </div>
    </div>
  );
}
